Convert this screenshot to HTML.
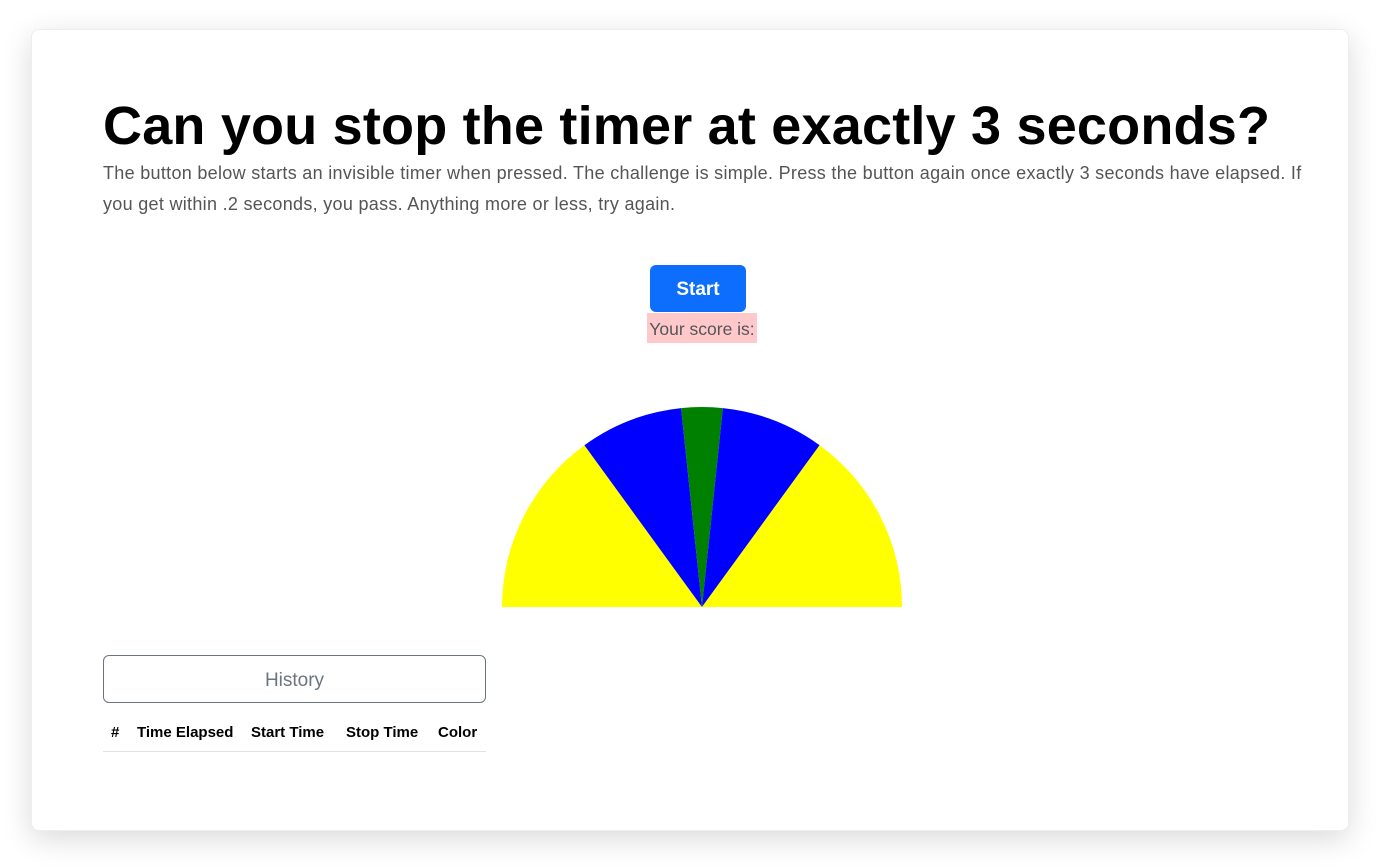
<!DOCTYPE html>
<html><head><meta charset="utf-8"><style>
html,body{margin:0;padding:0;background:#fff;width:1393px;height:868px;overflow:hidden;font-family:"Liberation Sans",sans-serif}
.card{position:absolute;left:31px;top:29px;width:1318px;height:802px;background:#fff;border-radius:8px;box-shadow:0 8px 30px rgba(0,0,0,.15);border:1px solid #eee;box-sizing:border-box}
h1{position:absolute;left:103px;top:95px;margin:0;font-size:54px;font-weight:bold;color:#000;white-space:nowrap;letter-spacing:0.2px}
p{position:absolute;left:103px;top:158px;margin:0;width:1220px;font-size:18px;line-height:31px;color:#555;white-space:nowrap;letter-spacing:0.3px}
.btn{position:absolute;left:650px;top:265px;width:96px;height:47px;background:#0d6efd;border-radius:6px;color:#fff;font-weight:bold;font-size:19px;text-align:center;line-height:50px}
.score{position:absolute;left:647px;top:313px;width:110px;height:30px;background:#ffc9cb;color:#555;font-size:17.5px;line-height:32px;text-align:center;white-space:nowrap}
.hist{position:absolute;left:103px;top:655px;width:383px;height:48px;box-sizing:border-box;border:1px solid #6c757d;border-radius:6px;color:#6c757d;font-size:19px;text-align:center;line-height:50px}
.th{position:absolute;top:724px;font-size:15px;font-weight:bold;color:#000;white-space:nowrap}
.line{position:absolute;left:103px;top:751px;width:383px;height:1px;background:#dee2e6}
</style></head><body>
<div class="card"></div>
<h1>Can you stop the timer at exactly 3 seconds?</h1>
<p>The button below starts an invisible timer when pressed. The challenge is simple. Press the button again once exactly 3 seconds have elapsed. If<br>you get within .2 seconds, you pass. Anything more or less, try again.</p>
<div class="btn">Start</div>
<div class="score">Your score is:</div>
<svg style="position:absolute;left:0;top:0" width="1393" height="868">
<path d="M502 607 A200 200 0 0 1 584.4 445.2 L702 607 Z" fill="#ff0"/>
<path d="M584.4 445.2 A200 200 0 0 1 681.1 408.1 L702 607 Z" fill="#00f"/>
<path d="M681.1 408.1 A200 200 0 0 1 722.9 408.1 L702 607 Z" fill="#008000"/>
<path d="M722.9 408.1 A200 200 0 0 1 819.6 445.2 L702 607 Z" fill="#00f"/>
<path d="M819.6 445.2 A200 200 0 0 1 902 607 L702 607 Z" fill="#ff0"/>
</svg>
<div class="hist">History</div>
<div class="th" style="left:111px">#</div>
<div class="th" style="left:137px">Time Elapsed</div>
<div class="th" style="left:251px">Start Time</div>
<div class="th" style="left:346px">Stop Time</div>
<div class="th" style="left:438px">Color</div>
<div class="line"></div>
</body></html>
